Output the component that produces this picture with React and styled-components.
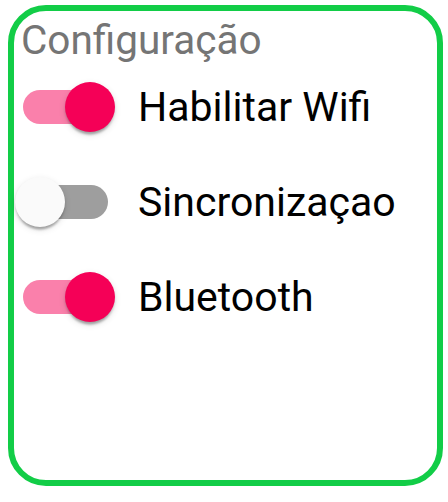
import styled, { createGlobalStyle } from "styled-components";
import { useState } from "react";

const GlobalStyle = createGlobalStyle`
  body {
    margin: 0;
    background: #ffffff;
    font-family: Roboto, "Noto Sans", sans-serif;
  }
`;

const settings = [
  { id: "wifi", label: "Habilitar Wifi", on: true },
  { id: "sync", label: "Sincronizaçao", on: false },
  { id: "bt", label: "Bluetooth", on: true },
];

const Toggle = ({ checked, onChange }) => (
  <SwitchRoot onClick={onChange} role="switch" aria-checked={checked}>
    <Track $checked={checked} />
    <Thumb $checked={checked} />
  </SwitchRoot>
);

const App = () => {
  const [values, setValues] = useState(
    Object.fromEntries(settings.map((s) => [s.id, s.on]))
  );

  return (
    <>
      <GlobalStyle />
      <Card>
        <Title>Configuração</Title>
        <List>
          {settings.map((s) => (
            <Row key={s.id}>
              <Toggle
                checked={values[s.id]}
                onChange={() => setValues({ ...values, [s.id]: !values[s.id] })}
              />
              <Label>{s.label}</Label>
            </Row>
          ))}
        </List>
      </Card>
    </>
  );
};

export default App;

const Card = styled.div`
  box-sizing: border-box;
  width: 435px;
  height: 481px;
  margin: 5px 0 0 8px;
  border: 6px solid #12cd47;
  border-radius: 38px;
  padding: 6px 0 0 1px;
`;

const Title = styled.div`
  font-size: 40.5px;
  line-height: 47px;
  color: #757575;
  padding-left: 6px;
`;

const List = styled.div`
  display: flex;
  flex-direction: column;
  gap: 45px;
  margin-top: 18px;
`;

const Row = styled.div`
  display: flex;
  align-items: center;
  gap: 23px;
`;

const SwitchRoot = styled.div`
  position: relative;
  width: 100px;
  height: 50px;
  flex-shrink: 0;
  cursor: pointer;
`;

const Track = styled.div`
  position: absolute;
  left: 8px;
  top: 8px;
  width: 85px;
  height: 34px;
  border-radius: 17px;
  background: ${(p) => (p.$checked ? "#fa80ab" : "#9e9e9e")};
`;

const Thumb = styled.div`
  position: absolute;
  top: 0;
  left: ${(p) => (p.$checked ? "50px" : "0")};
  width: 50px;
  height: 50px;
  border-radius: 50%;
  background: ${(p) => (p.$checked ? "#f50057" : "#fafafa")};
  box-shadow: 0 5px 2.5px -2.5px rgba(0, 0, 0, 0.2),
    0 2.5px 2.5px 0 rgba(0, 0, 0, 0.14), 0 2.5px 7.5px 0 rgba(0, 0, 0, 0.12);
`;

const Label = styled.span`
  font-size: 41px;
  line-height: 50px;
  color: #000;
`;
